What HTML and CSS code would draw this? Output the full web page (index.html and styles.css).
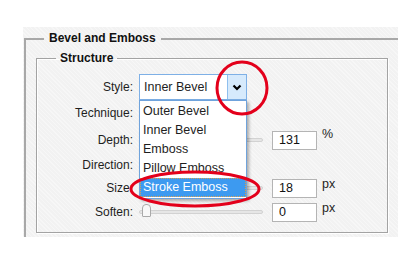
FILE: index.html
```html
<!DOCTYPE html>
<html lang="en">
<head>
  <meta charset="UTF-8" />
  <title>Bevel and Emboss</title>
  <link rel="stylesheet" href="styles.css">
</head>
<body>

  <div class="panel">
    <fieldset class="grupo">
      <legend>Bevel and Emboss</legend>

      <fieldset class="estructura">
        <legend>Structure</legend>

        <div class="fila fila-style">
          <label>Style:</label>
          <div class="combo">
            <span class="combo-valor">Inner Bevel</span>
            <span class="combo-flecha">
              <svg width="10" height="7" viewBox="0 0 10 7"><polyline points="1.5,1.5 5,5 8.5,1.5" /></svg>
            </span>

            <ul class="lista">
              <li>Outer Bevel</li>
              <li>Inner Bevel</li>
              <li>Emboss</li>
              <li>Pillow Emboss</li>
              <li class="activo">Stroke Emboss</li>
            </ul>
          </div>
        </div>

        <div class="fila fila-technique">
          <label>Technique:</label>
        </div>

        <div class="fila fila-depth">
          <label>Depth:</label>
          <div class="pista"></div>
          <input class="valor" type="text" value="131">
          <span class="unidad">%</span>
        </div>

        <div class="fila fila-direction">
          <label>Direction:</label>
        </div>

        <div class="fila fila-size">
          <label>Size:</label>
          <div class="pista"></div>
          <input class="valor" type="text" value="18">
          <span class="unidad">px</span>
        </div>

        <div class="fila fila-soften">
          <label>Soften:</label>
          <div class="pista"><span class="cursor"></span></div>
          <input class="valor" type="text" value="0">
          <span class="unidad">px</span>
        </div>
      </fieldset>
    </fieldset>
  </div>

  <!-- marcas rojas encima de la captura -->
  <svg class="marcas" width="420" height="269" viewBox="0 0 420 269">
    <ellipse cx="242" cy="88" rx="25" ry="26" />
    <ellipse cx="195" cy="189" rx="64" ry="17" />
  </svg>

</body>
</html>
```

FILE: styles.css
```css
:root {
  --panel: #f2f2f2;
  --linea: #a8a8a8;
  --texto: #1e1e1e;
  --azul: #3d9af0;
  --rojo: #e3001b;
}

* {
  margin: 0;
  padding: 0;
  box-sizing: border-box;
}

body {
  font-family: 'Liberation Sans', Arial, sans-serif;
  font-size: 12px;
  color: var(--texto);
  background: white;
  position: relative;
}

.panel {
  margin: 27px 0 0 23px;
  width: 375px;
  height: 210px;
  background: var(--panel);
  background-image: repeating-linear-gradient(45deg, rgba(255,255,255,0.35) 0 1px, transparent 1px 3px);
  overflow: hidden;
}

.grupo {
  margin: 4px 0 0 1px;
  border: none;
  border-top: 2px solid var(--linea);
  border-left: 2px solid var(--linea);
  padding: 0 0 0 10px;
  height: 260px;
}

legend {
  font-weight: bold;
  line-height: 15px;
  font-size: 12px;
  padding: 0 5px;
  color: #111;
}

.grupo > legend {
  margin-left: 8px;
}

.estructura {
  margin-top: 5px;
  width: 352px;
  border: 1px solid #a3a3a3;
  box-shadow: inset 1px 1px 0 #fff, 1px 1px 0 #fff;
  padding: 8px 0 8px 0;
}

.estructura > legend {
  margin-left: 19px;
  padding: 0 4px;
}

.fila {
  display: flex;
  align-items: center;
  height: 24px;
}

.fila-style, .fila-technique { height: 26px; }
.fila-depth { height: 28px; }
.fila-direction { height: 22px; }

.fila label {
  width: 96px;
  text-align: right;
  flex: none;
}

.combo {
  position: relative;
  margin-left: 6px;
  width: 108px;
  height: 26px;
  border: 1px solid #7eb0e6;
  background: white;
  display: flex;
  align-items: center;
}

.combo-valor {
  flex: 1;
  padding-left: 4px;
  font-size: 12.5px;
}

.combo-flecha {
  width: 19px;
  height: 100%;
  background: #d6eafc;
  border-left: 1px solid #8fbfee;
  display: flex;
  align-items: center;
  justify-content: center;
}

.combo-flecha polyline {
  fill: none;
  stroke: #000;
  stroke-width: 2.2;
}

.lista {
  position: absolute;
  top: 25px;
  left: -1px;
  width: 108px;
  list-style: none;
  background: white;
  border: 1px solid #6fa3dc;
  padding: 1px 0 1px 0;
  box-shadow: 2px 2px 3px rgba(0,0,0,0.3);
  z-index: 2;
}

.lista li {
  height: 19px;
  line-height: 19px;
  padding-left: 3px;
  font-size: 12.5px;
  white-space: nowrap;
}

.lista li.activo {
  background: var(--azul);
  color: white;
  outline: 1px dotted #d9a050;
  outline-offset: -1px;
}

.pista {
  position: relative;
  margin-left: 6px;
  width: 124px;
  height: 4px;
  background: #e6e6e6;
  border: 1px solid #d2d2d2;
  border-radius: 2px;
}

.cursor {
  position: absolute;
  left: 2px;
  top: -7px;
  width: 9px;
  height: 13px;
  background: #f8f8f8;
  border: 1px solid #a9a9a9;
  border-radius: 4px 4px 1px 1px;
}

.valor {
  margin-left: 9px;
  width: 45px;
  height: 19px;
  border: 1px solid #b4b4b4;
  background: white;
  font-family: inherit;
  font-size: 12.5px;
  padding-left: 6px;
  color: #111;
}

.unidad {
  margin-left: 5px;
  font-size: 12.5px;
  align-self: flex-start;
  margin-top: 1px;
}

.marcas {
  position: absolute;
  top: 0;
  left: 0;
  pointer-events: none;
  z-index: 5;
}

.marcas ellipse {
  fill: none;
  stroke: var(--rojo);
  stroke-width: 3;
}
```
